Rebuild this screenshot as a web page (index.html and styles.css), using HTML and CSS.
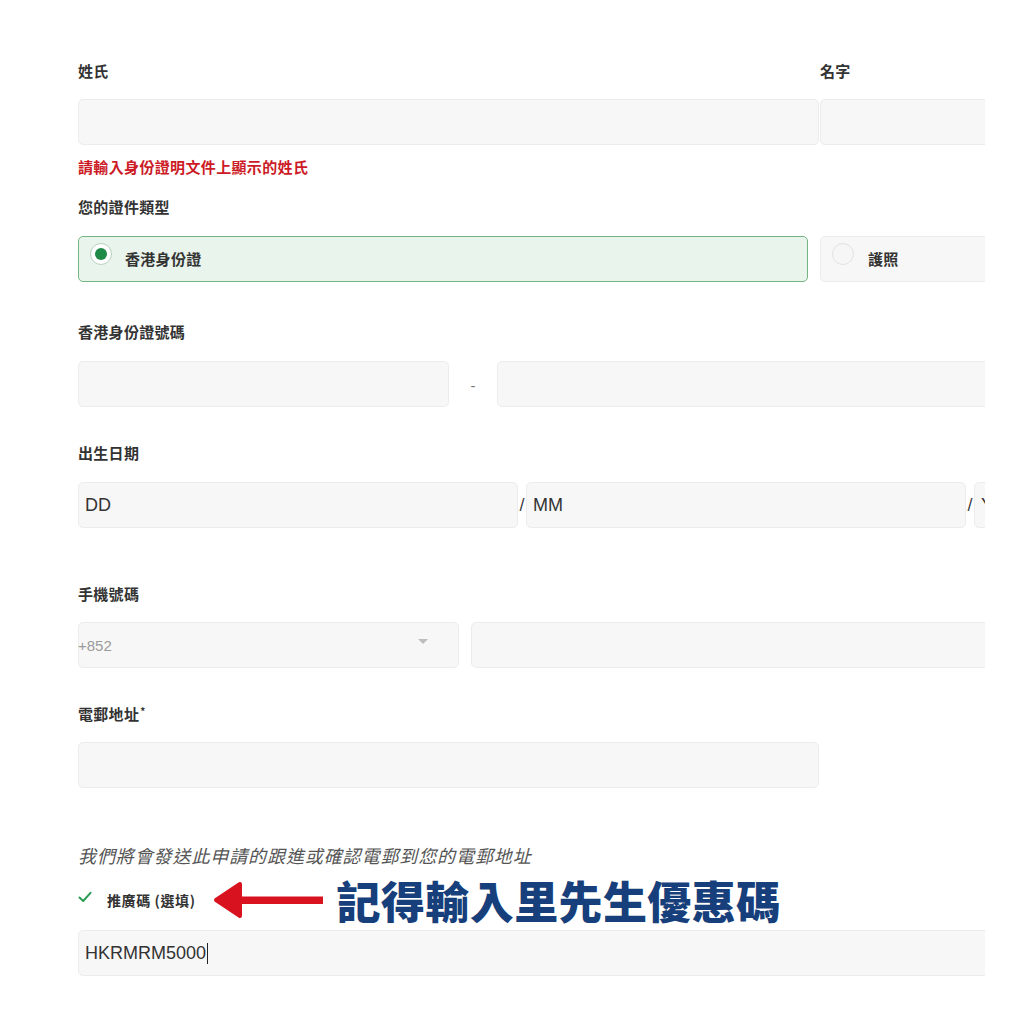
FILE: index.html
```html
<!DOCTYPE html>
<html lang="zh-Hant">
<head>
<meta charset="utf-8">
<title>申請表格</title>
<link rel="stylesheet" href="styles.css">
</head>
<body>
<div class="form">
  <div class="row name-row">
    <div class="col-last">
      <div class="label">姓氏</div>
      <div class="input"></div>
    </div>
    <div class="col-first">
      <div class="label">名字</div>
      <div class="input"></div>
    </div>
  </div>
  <div class="error">請輸入身份證明文件上顯示的姓氏</div>

  <div class="label sec-doc">您的證件類型</div>
  <div class="row radio-row">
    <div class="radio radio-on">
      <span class="dot dot-on"></span>
      <span class="radio-text">香港身份證</span>
    </div>
    <div class="radio radio-off">
      <span class="dot"></span>
      <span class="radio-text">護照</span>
    </div>
  </div>

  <div class="label sec-40">香港身份證號碼</div>
  <div class="row">
    <div class="input w-371"></div>
    <div class="sep sep-dash">-</div>
    <div class="input w-wide"></div>
  </div>

  <div class="label sec-36">出生日期</div>
  <div class="row">
    <div class="input w-440 txt">DD</div>
    <div class="sep sep-slash">/</div>
    <div class="input w-440 txt">MM</div>
    <div class="sep sep-slash">/</div>
    <div class="input w-440 txt">YYYY</div>
  </div>

  <div class="label sec-56 lb-18">手機號碼</div>
  <div class="row">
    <div class="input select w-381">
      <span class="select-val">+852</span>
      <span class="caret-down"></span>
    </div>
    <div class="input w-wide gap-12"></div>
  </div>

  <div class="label sec-36 lb-18">電郵地址<sup class="star">*</sup></div>
  <div class="input w-741"></div>

  <p class="note">我們將會發送此申請的跟進或確認電郵到您的電郵地址</p>

  <div class="promo-row">
    <svg class="check" width="14" height="12" viewBox="0 0 14 12" aria-hidden="true">
      <path d="M1.5 6.5 L5.2 10 L12.5 1.8" fill="none" stroke="#2a9d55" stroke-width="2" stroke-linecap="round" stroke-linejoin="round"/>
    </svg>
    <span class="promo-label">推廣碼 (選填)</span>
    <svg class="arrow" width="112" height="38" viewBox="0 0 112 38" aria-hidden="true">
      <polygon points="3,19 27,3 27,35" fill="#d9121f" stroke="#d9121f" stroke-width="4" stroke-linejoin="round"/>
      <rect x="26" y="15.5" width="84" height="7.5" fill="#d9121f"/>
    </svg>
    <span class="reminder">記得輸入里先生優惠碼</span>
  </div>
  <div class="input w-wide txt promo-input">HKRMRM5000<span class="text-caret"></span></div>
</div>
</body>
</html>
```

FILE: styles.css
```css
html, body {
  margin: 0;
  padding: 0;
  background: #ffffff;
}

body {
  font-family: "Noto Sans CJK TC", "Noto Sans", sans-serif;
  color: #333333;
}

.form {
  margin-left: 78px;
  width: 907px;
  overflow: hidden;
  padding-top: 61px;
  padding-bottom: 40px;
}

.row {
  display: flex;
  align-items: center;
}

.label {
  font-size: 15px;
  font-weight: 700;
  line-height: 20px;
  letter-spacing: 0.3px;
  color: #333333;
  margin-bottom: 19px;
  white-space: nowrap;
}

.lb-18 { margin-bottom: 18px; }

.star {
  font-size: 10px;
  vertical-align: top;
  line-height: 14px;
  margin-left: 1px;
}

.input {
  flex-shrink: 0;
  height: 46px;
  box-sizing: border-box;
  background: #f7f7f7;
  border: 1px solid #ececec;
  border-radius: 5px;
}

.txt {
  display: flex;
  align-items: center;
  padding-left: 6px;
  font-family: "Liberation Sans", Arial, sans-serif;
  font-size: 18px;
  color: #333333;
}

.name-row {
  align-items: flex-start;
}

.col-last {
  width: 741px;
  flex-shrink: 0;
}

.col-first {
  width: 300px;
  flex-shrink: 0;
  margin-left: 1px;
}

.name-row .label { margin-bottom: 18px; }

.error {
  margin-top: 12px;
  font-size: 15px;
  font-weight: 700;
  line-height: 20px;
  letter-spacing: 0.35px;
  color: #cc1b26;
}

.sec-doc { margin-top: 20px; }
.sec-36 { margin-top: 36px; }
.sec-40 { margin-top: 40px; }
.sec-56 { margin-top: 56px; }

.radio-row {
  gap: 12px;
}

.radio {
  flex-shrink: 0;
  height: 46px;
  box-sizing: border-box;
  display: flex;
  align-items: flex-start;
  padding: 5px 0 0 11px;
  border-radius: 5px;
}

.radio-on {
  width: 730px;
  background: #e9f4ec;
  border: 1px solid #74b483;
}

.radio-off {
  width: 300px;
  background: #f7f7f7;
  border: 1px solid #ececec;
}

.dot {
  width: 22px;
  height: 22px;
  box-sizing: border-box;
  border-radius: 50%;
  border: 1px solid #e2e2e2;
  background: #f6f6f6;
  display: flex;
  align-items: center;
  justify-content: center;
  flex-shrink: 0;
  margin-top: 1px;
}

.dot-on {
  border-color: #b9d0be;
  background: #ffffff;
}

.dot-on::after {
  content: "";
  width: 12px;
  height: 12px;
  border-radius: 50%;
  background: #1f8a47;
}

.radio-text {
  font-size: 15px;
  font-weight: 700;
  line-height: 34px;
  letter-spacing: 0.3px;
  margin-left: 13px;
  color: #333333;
}

.radio-off .radio-text { margin-left: 14px; }

.w-371 { width: 371px; }
.w-381 { width: 381px; }
.w-440 { width: 440px; }
.w-741 { width: 741px; }
.w-wide { width: 520px; }
.gap-12 { margin-left: 12px; }

.sep {
  flex-shrink: 0;
  text-align: center;
  font-family: "Liberation Sans", Arial, sans-serif;
}

.sep-dash {
  width: 48px;
  font-size: 15px;
  color: #777777;
  padding-top: 2px;
}

.sep-slash {
  width: 8px;
  font-size: 18px;
  color: #444444;
}

.select {
  display: flex;
  align-items: center;
  justify-content: space-between;
  padding-right: 30px;
}

.select-val {
  font-family: "Liberation Sans", Arial, sans-serif;
  font-size: 15px;
  color: #9b9b9b;
  margin-left: -1px;
}

.caret-down {
  width: 0;
  height: 0;
  border-left: 5px solid transparent;
  border-right: 5px solid transparent;
  border-top: 5px solid #bdbdbd;
  margin-top: -8px;
}

.note {
  margin: 56px 0 0 0;
  font-size: 18px;
  line-height: 22px;
  font-style: italic;
  letter-spacing: 0.9px;
  color: #555555;
  white-space: nowrap;
}

.promo-row {
  margin-top: 14px;
  height: 40px;
  display: flex;
  align-items: center;
  white-space: nowrap;
}

.check {
  margin-top: -6px;
  flex-shrink: 0;
}

.promo-label {
  margin-left: 15px;
  font-size: 14px;
  font-weight: 700;
  letter-spacing: 0.6px;
  color: #333333;
}

.arrow {
  margin-left: 17px;
  flex-shrink: 0;
}

.reminder {
  margin-left: 12px;
  font-size: 44px;
  font-weight: 900;
  line-height: 40px;
  letter-spacing: 0.4px;
  color: #173f7b;
}

.promo-input {
  margin-top: 10px;
  width: 960px;
}

.text-caret {
  display: inline-block;
  width: 1px;
  height: 21px;
  background: #222222;
  margin-left: 1px;
}
```
